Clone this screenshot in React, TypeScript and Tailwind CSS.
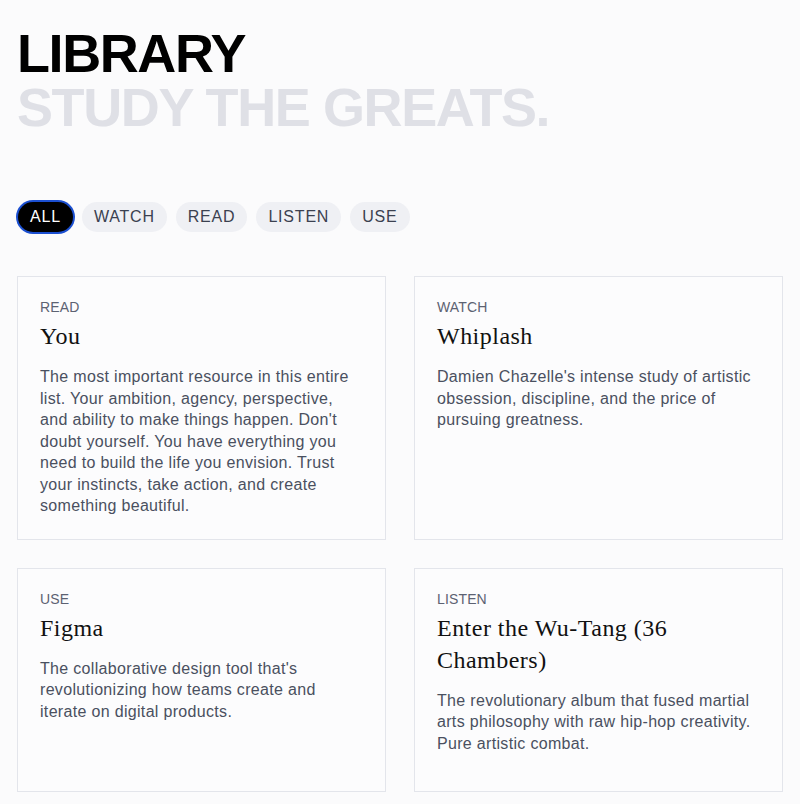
const filters = ['ALL', 'WATCH', 'READ', 'LISTEN', 'USE'];

const items = [
  {
    type: 'READ',
    title: 'You',
    body: "The most important resource in this entire list. Your ambition, agency, perspective, and ability to make things happen. Don't doubt yourself. You have everything you need to build the life you envision. Trust your instincts, take action, and create something beautiful.",
  },
  {
    type: 'WATCH',
    title: 'Whiplash',
    body: "Damien Chazelle's intense study of artistic obsession, discipline, and the price of pursuing greatness.",
  },
  {
    type: 'USE',
    title: 'Figma',
    body: "The collaborative design tool that's revolutionizing how teams create and iterate on digital products.",
  },
  {
    type: 'LISTEN',
    title: 'Enter the Wu-Tang (36 Chambers)',
    body: 'The revolutionary album that fused martial arts philosophy with raw hip-hop creativity. Pure artistic combat.',
  },
];

function App() {
  return (
    <div className="min-h-screen bg-[#fbfbfc] px-[17px] pt-[26px] pb-3 font-['Liberation_Sans',Arial,sans-serif]">
      <header>
        <h1 className="text-[54px] font-bold leading-[54px] tracking-[-0.026em] text-black">LIBRARY</h1>
        <h2 className="text-[54px] font-bold leading-[54px] tracking-[-0.026em] text-[#dfe0e6]">STUDY THE GREATS.</h2>
      </header>

      <nav className="mt-[68px] flex gap-[9px] pl-px">
        {filters.map((f) => (
          <button
            key={f}
            className={
              f === 'ALL'
                ? 'rounded-full bg-black px-3 py-1 text-base leading-[22px] tracking-[0.05em] text-white ring-2 ring-[#1b4fd1]'
                : 'rounded-full bg-[#eff0f4] px-3 py-1 text-base leading-[22px] tracking-[0.05em] text-[#3b4150]'
            }
          >
            {f}
          </button>
        ))}
      </nav>

      <section className="mt-[44px] grid grid-cols-2 gap-7">
        {items.map((it) => (
          <article key={it.title} className="min-h-56 border border-[#e3e5eb] bg-[#fcfcfd] pl-[22px] pr-6 pt-[22px] pb-[22px]">
            <div className="text-sm leading-4 tracking-[0.01em] text-[#5c6272]">{it.type}</div>
            <h3 className="mt-[5px] font-['Liberation_Serif',Georgia,serif] text-2xl leading-8 tracking-[0.02em] text-[#111]">{it.title}</h3>
            <p className="mt-[14px] text-base leading-[21.5px] tracking-[0.02em] text-[#4a5060]">{it.body}</p>
          </article>
        ))}
      </section>
    </div>
  );
}

export default App;
